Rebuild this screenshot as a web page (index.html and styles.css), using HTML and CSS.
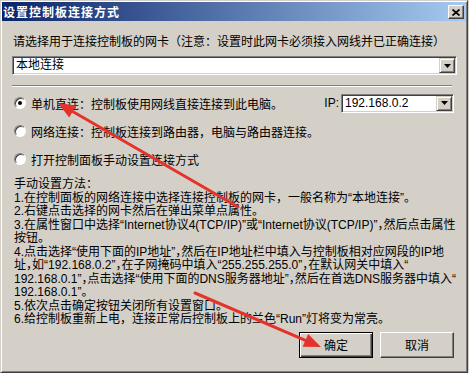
FILE: index.html
```html
<!DOCTYPE html>
<html lang="zh-CN">
<head>
<meta charset="utf-8">
<title>设置控制板连接方式</title>
<link rel="stylesheet" href="styles.css">
</head>
<body>
<div class="window">
  <div class="titlebar">
    <span class="title">设置控制板连接方式</span>
    <span class="close"><svg width="8" height="7" viewBox="0 0 8 7"><path d="M0.5 0.5 L7.5 6.5 M7.5 0.5 L0.5 6.5" stroke="#000" stroke-width="1.7" fill="none"/></svg></span>
  </div>
  <div class="content">
    <div class="label">请选择用于连接控制板的网卡（注意：设置时此网卡必须接入网线并已正确连接）</div>
    <div class="combo wide">
      <span class="combo-text">本地连接</span>
      <span class="drop"><svg width="7" height="4" viewBox="0 0 7 4"><polygon points="0,0 7,0 3.5,4" fill="#000"/></svg></span>
    </div>
    <div class="sep"></div>
    <div class="row row1">
      <span class="radio checked"><span class="dot"></span></span>
      <span class="rlabel">单机直连：控制板使用网线直接连接到此电脑。</span>
      <span class="ip-group">
        <span class="ip-label">IP:</span>
        <span class="combo ip">
          <span class="combo-text">192.168.0.2</span>
          <span class="drop"><svg width="7" height="4" viewBox="0 0 7 4"><polygon points="0,0 7,0 3.5,4" fill="#000"/></svg></span>
        </span>
      </span>
    </div>
    <div class="row row2">
      <span class="radio"></span>
      <span class="rlabel">网络连接：控制板连接到路由器，电脑与路由器连接。</span>
    </div>
    <div class="row row3">
      <span class="radio"></span>
      <span class="rlabel">打开控制面板手动设置连接方式</span>
    </div>
    <div class="manual">
      <div>手动设置方法：</div>
      <div>1.在控制面板的网络连接中选择连接控制板的网卡，一般名称为“本地连接”。</div>
      <div>2.右键点击选择的网卡然后在弹出菜单点属性。</div>
      <div>3.在属性窗口中选择“Internet协议4(TCP/IP)”或“Internet协议(TCP/IP)”<span class="hw">，</span>然后点击属性</div>
      <div>按钮。</div>
      <div>4.点击选择“使用下面的IP地址”<span class="hw">，</span>然后在IP地址栏中填入与控制板相对应网段的IP地</div>
      <div>址<span class="hw">，</span>如“192.168.0.2”<span class="hw">，</span>在子网掩码中填入“255.255.255.0”<span class="hw">，</span>在默认网关中填入“</div>
      <div>192.168.0.1”<span class="hw">，</span>点击选择“使用下面的DNS服务器地址”<span class="hw">，</span>然后在首选DNS服务器中填入“</div>
      <div>192.168.0.1”。</div>
      <div>5.依次点击确定按钮关闭所有设置窗口。</div>
      <div>6.给控制板重新上电，连接正常后控制板上的兰色“Run”灯将变为常亮。</div>
    </div>
    <div class="buttons">
      <button class="btn default">确定</button>
      <button class="btn">取消</button>
    </div>
  </div>
  <svg class="arrows" width="469" height="373" viewBox="0 0 469 373">
    <g stroke="#e5332b" stroke-width="3" stroke-linecap="round" fill="none">
      <line x1="238" y1="207" x2="72.7" y2="111.5"/>
      <line x1="195" y1="293" x2="305.4" y2="340.3"/>
    </g>
    <g fill="#e5332b">
      <polygon points="58,103 76.2,105.4 69.2,117.6"/>
      <polygon points="321,347 302.6,346.7 308.2,333.9"/>
    </g>
  </svg>
</div>
</body>
</html>
```
FILE: styles.css
```css
* { box-sizing: border-box; }

html, body {
  margin: 0;
  padding: 0;
  background: #d4d0c8;
}

body {
  font-family: "Liberation Sans", "Noto Sans CJK SC", sans-serif;
  font-size: 12px;
  color: #000;
}

.window {
  position: relative;
  width: 468px;
  height: 373px;
  background: #d4d0c8;
  border: 1px solid;
  border-color: #d4d0c8 #404040 #404040 #d4d0c8;
  box-shadow: inset 1px 1px #fff, inset -1px -1px #808080;
  padding: 1px;
  display: flex;
  flex-direction: column;
}

.titlebar {
  height: 19px;
  flex: none;
  display: flex;
  align-items: flex-start;
  justify-content: space-between;
  background: linear-gradient(to right, #0a246a, #a6caf0);
}

.title {
  color: #fff;
  font-family: "Noto Sans CJK SC", sans-serif;
  font-weight: bold;
  font-size: 12px;
  line-height: 19px;
  padding-left: 1px;
  letter-spacing: 1px;
}

.close {
  width: 16px;
  height: 14px;
  margin: 3px 2px 0 0;
  background: #d4d0c8;
  border: 1px solid;
  border-color: #fff #404040 #404040 #fff;
  box-shadow: inset -1px -1px #808080;
  display: flex;
  align-items: center;
  justify-content: center;
}

.content {
  padding: 0 9px 0 10px;
  display: flex;
  flex-direction: column;
}

.label {
  margin-top: 14px;
  line-height: 14px;
  padding-left: 1px;
  white-space: nowrap;
}

.combo {
  height: 19px;
  background: #fff;
  border: 1px solid;
  border-color: #808080 #fff #fff #808080;
  box-shadow: inset 1px 1px #404040, inset -1px -1px #d4d0c8;
  display: flex;
  align-items: center;
  padding: 1px;
}

.combo.wide { margin-top: 7px; }

.combo-text {
  flex: 1;
  padding-left: 2px;
  line-height: 15px;
  white-space: nowrap;
}

.drop {
  width: 16px;
  height: 15px;
  flex: none;
  background: #d4d0c8;
  border: 1px solid;
  border-color: #d4d0c8 #404040 #404040 #d4d0c8;
  box-shadow: inset 1px 1px #fff, inset -1px -1px #808080;
  display: flex;
  align-items: center;
  justify-content: center;
}

.sep {
  margin-top: 10px;
  width: 440px;
  height: 2px;
  border-top: 1px solid #808080;
  border-bottom: 1px solid #fff;
}

.row {
  height: 20px;
  display: flex;
  align-items: center;
  white-space: nowrap;
}

.row1 { margin-top: 6px; }
.row2, .row3 { margin-top: 8px; }

.radio {
  width: 12px;
  height: 12px;
  flex: none;
  margin-left: 2px;
  margin-right: 5px;
  border-radius: 50%;
  background: #fff;
  border: 1px solid;
  border-color: #808080 #fff #fff #808080;
  box-shadow: inset 1px 1px #404040;
  display: flex;
  align-items: center;
  justify-content: center;
}

.dot {
  width: 4px;
  height: 4px;
  border-radius: 50%;
  background: #000;
}

.ip-group {
  margin-left: auto;
  margin-right: 3px;
  display: flex;
  align-items: center;
}

.ip-label { margin-right: 2px; }

.combo.ip { width: 113px; }

.manual {
  margin-top: 9px;
  padding-left: 2px;
  line-height: 13.5px;
  white-space: nowrap;
}

.hw { font-feature-settings: "halt"; }

.buttons {
  margin-top: 5px;
  margin-right: 3px;
  display: flex;
  justify-content: flex-end;
  gap: 7px;
}

.btn {
  width: 74px;
  height: 26px;
  padding: 0;
  font: inherit;
  color: #000;
  background: #d4d0c8;
  border: 1px solid;
  border-color: #fff #404040 #404040 #fff;
  box-shadow: inset -1px -1px #808080;
}

.btn.default {
  border: 1px solid #000;
  box-shadow: inset 1px 1px #fff, inset -1px -1px #404040, inset -2px -2px #808080;
}

.arrows {
  position: absolute;
  left: -1px;
  top: -1px;
  pointer-events: none;
}
```
